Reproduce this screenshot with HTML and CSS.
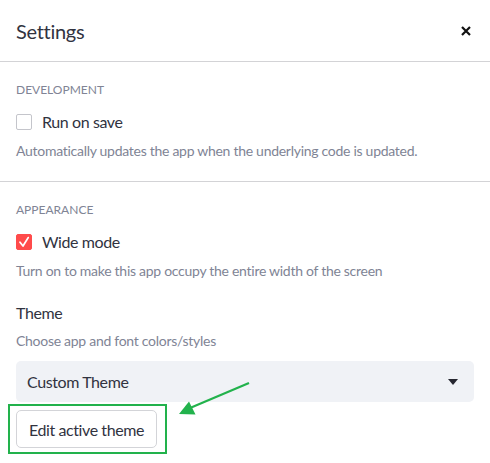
FILE: index.html
```html
<!DOCTYPE html>
<html>
<head>
<meta charset="utf-8">
<link rel="stylesheet" href="styles.css">
</head>
<body>
<div class="dialog">
  <div class="header">
    <div class="title">Settings</div>
    <svg class="close" width="10" height="10" viewBox="0 0 10 10"><path d="M1 1L9 9M9 1L1 9" stroke="#111" stroke-width="2.2" stroke-linecap="butt"/></svg>
  </div>
  <div class="section">
    <div class="label">DEVELOPMENT</div>
    <div class="check-row">
      <span class="box"></span>
      <span class="check-text">Run on save</span>
    </div>
    <div class="desc">Automatically updates the app when the underlying code is updated.</div>
  </div>
  <div class="section last">
    <div class="label">APPEARANCE</div>
    <div class="check-row">
      <span class="box checked"><svg width="16" height="16" viewBox="0 0 16 16"><path d="M4 8.2L7 12L12.2 3.6" fill="none" stroke="#fff" stroke-width="1.8" stroke-linecap="round" stroke-linejoin="round"/></svg></span>
      <span class="check-text">Wide mode</span>
    </div>
    <div class="desc">Turn on to make this app occupy the entire width of the screen</div>
    <div class="field-title">Theme</div>
    <div class="desc small">Choose app and font colors/styles</div>
    <div class="select">
      <span>Custom Theme</span>
      <svg width="10" height="6" viewBox="0 0 10 6"><path d="M0 0H10L5 6Z" fill="#262730"/></svg>
    </div>
    <div class="highlight">
      <button class="btn">Edit active theme</button>
    </div>
  </div>
  <svg class="annot" width="490" height="463" viewBox="0 0 490 463">
    <path d="M249 383L190 408" stroke="#22b24c" stroke-width="2.2"/>
    <path d="M179 414L189 401.5L195.5 414.5Z" fill="#22b24c"/>
  </svg>
</div>
</body>
</html>
```
FILE: styles.css
```css
* { box-sizing: border-box; }
html, body { margin: 0; padding: 0; background: #fff; }
body { font-family: Lato, "Noto Sans", sans-serif; color: #262730; }
.dialog { position: relative; width: 490px; height: 463px; overflow: hidden; }
.header {
  height: 62px;
  display: flex;
  align-items: center;
  justify-content: space-between;
  padding: 0 19px 0 16px;
  border-bottom: 1px solid #d3d3d6;
}
.title { font-size: 20px; line-height: 28px; color: #31333f; letter-spacing: -0.3px; }
.close { display: block; }
.section { padding: 20px 16px 20px; border-bottom: 1px solid #d3d3d6; }
.section.last { border-bottom: none; padding-bottom: 0; }
.label { font-size: 12px; line-height: 16px; color: #808495; }
.check-row { display: flex; align-items: center; margin-top: 12px; height: 24px; }
.box {
  width: 16px; height: 16px;
  border: 1px solid #c4c5cb;
  border-radius: 2px;
  margin-right: 10px;
  display: inline-flex;
}
.box.checked { background: #ff4b4b; border-color: #ff4b4b; }
.box.checked svg { margin: -1px; }
.check-text { font-size: 16px; line-height: 24px; color: #31333f; letter-spacing: -0.4px; }
.desc { font-size: 14px; line-height: 20px; color: #808495; margin-top: 7px; letter-spacing: -0.28px; }
.field-title { font-size: 16px; line-height: 24px; color: #31333f; margin-top: 20px; letter-spacing: -0.4px; }
.desc.small { margin-top: 6px; }
.select {
  margin-top: 10px;
  height: 41px;
  background: #f0f2f6;
  border-radius: 5px;
  display: flex;
  align-items: center;
  justify-content: space-between;
  padding: 0 16px 0 11px;
  font-size: 16px;
  letter-spacing: -0.4px;
  color: #31333f;
}
.highlight {
  margin: 2px 0 0 -8px;
  width: 159px;
  height: 50px;
  border: 2px solid #22b24c;
  padding: 4px 0 0 6px;
}
.btn {
  font-family: inherit;
  width: 141px;
  height: 38px;
  background: #fff;
  border: 1px solid #d3d4d8;
  border-radius: 5px;
  font-size: 16px;
  letter-spacing: -0.4px;
  color: #31333f;
  padding: 0;
}
.annot { position: absolute; left: 0; top: 0; pointer-events: none; }
```
